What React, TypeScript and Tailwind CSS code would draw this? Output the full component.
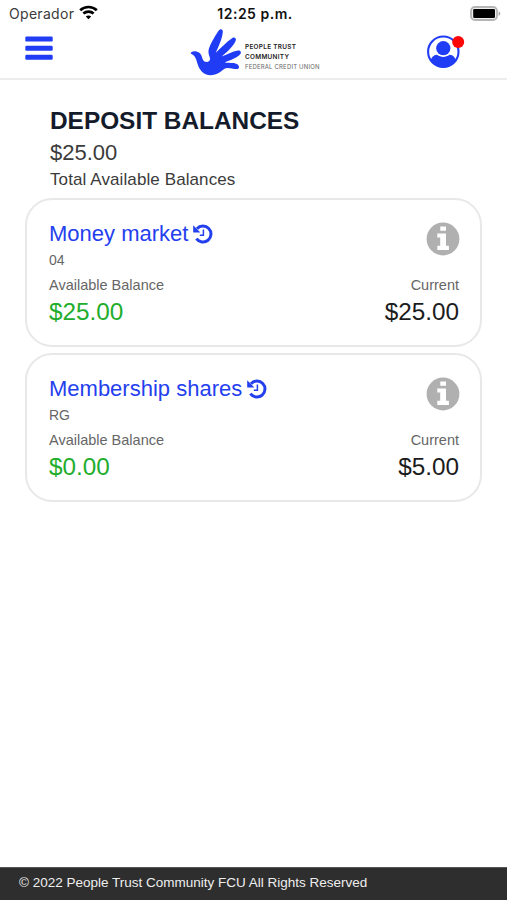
type Account = { name: string; code: string; available: string; current: string };

const accounts: Account[] = [
  { name: "Money market", code: "04", available: "$25.00", current: "$25.00" },
  { name: "Membership shares", code: "RG", available: "$0.00", current: "$5.00" },
];

function StatusBar() {
  return (
    <div className="grid h-7 grid-cols-[1fr_auto_1fr] items-center pr-[6px] pl-[9px] font-['Inter','Liberation_Sans',sans-serif]">
      <div className="flex items-center gap-[5px] text-[14px] leading-7 text-[#3a3a3a]">
        <span className="tracking-[0.3px]">Operador</span>
        <svg width="19" height="15" viewBox="0 0 19 15" className="-mt-[3px]" fill="none" stroke="#000" strokeWidth="2.7">
          <path d="M1.2 5.3C5.8 .9 13.2 .9 17.8 5.3" />
          <path d="M4.4 8.6C7.3 5.9 11.7 5.9 14.6 8.6" />
          <path d="M9.5 14.2 6.8 11.5C8.3 10.1 10.7 10.1 12.2 11.5Z" fill="#000" stroke="none" />
        </svg>
      </div>
      <span className="text-[14px] leading-7 font-semibold tracking-[0.5px] text-[#111]">12:25 p.m.</span>
      <svg width="31" height="15" viewBox="0 0 31 15" className="-mt-[2px] justify-self-end">
        <rect x="1" y="1" width="26" height="13" rx="4" fill="#eee" stroke="#b5b5b5" strokeWidth="1.8" />
        <rect x="3.2" y="3" width="21.8" height="9" rx="1.2" fill="#000" />
        <path d="M28.6 5.2C30.8 6 30.8 9 28.6 9.8Z" fill="#a5a5a5" />
      </svg>
    </div>
  );
}

function MenuIcon() {
  return (
    <svg width="28" height="24" viewBox="0 0 28 24" className="mt-[8px]" fill="#213cf5">
      <rect x=".3" y=".6" width="27.4" height="5" rx="1.2" />
      <rect x=".3" y="9.7" width="27.4" height="5" rx="1.2" />
      <rect x=".3" y="18.8" width="27.4" height="5" rx="1.2" />
    </svg>
  );
}

function Logo() {
  return (
    <div className="flex items-start">
      <svg width="52" height="48" viewBox="190 28 52 48" fill="#213cf5">
        <path d="M190.6 53.4C191.2 50.6 196.5 50.4 199.4 52.8C203 56 201.7 60.8 205.2 61.8C207.8 62.4 210.4 61.2 210 58.5C209.8 56.5 208 53.5 208.5 50.5C209.7 44.5 214.6 37 218.5 30.8C219.9 28.4 222.8 28.7 222.8 31.4C222.6 38.2 218.5 46 215.8 52.8C220.5 48.2 226.5 42 232.4 38C234.8 36.8 236.6 38.6 235.6 41C232.9 47 227 52 221.7 56.4C226.5 54.8 232.3 51.3 238 50.4C240.8 50.2 241.7 52.5 240.2 54.3C236.4 58.6 230 60.2 224.7 62.4C228.5 63.3 233 62 236.9 63.9C239.8 65.6 239.6 68.7 236.9 69.1C233 69.3 229.5 67.4 226 68.3C221.8 69.4 220 74.8 211 75.2C203.5 75.4 199.3 69.7 197.7 64.2C196.3 60 196 55.8 190.6 53.4Z" />
      </svg>
      <div className="mt-[15px] ml-[3px] font-['Inter','Liberation_Sans',sans-serif] text-[6.4px] leading-[9.5px] font-semibold tracking-[0.3px] whitespace-nowrap text-[#222]">
        <div>PEOPLE TRUST</div>
        <div>COMMUNITY</div>
        <div className="text-[6px] font-normal tracking-[0.17px] text-[#666]">FEDERAL CREDIT UNION</div>
      </div>
    </div>
  );
}

function Profile() {
  return (
    <svg width="38" height="33" viewBox="0 0 38 33">
      <clipPath id="avatar">
        <circle cx="16.3" cy="16.7" r="15.5" />
      </clipPath>
      <circle cx="16.3" cy="16.7" r="15.2" fill="#fff" stroke="#213cf5" strokeWidth="2.1" />
      <circle cx="16.3" cy="13.2" r="7.1" fill="#213cf5" />
      <path clipPath="url(#avatar)" d="M3 33V28C4 22.5 6.5 19.8 10 19.8C14 22.6 18.6 22.6 22.6 19.8C26.1 19.8 28.6 22.5 29.6 28V33Z" fill="#213cf5" />
      <circle cx="31.2" cy="7.1" r="6" fill="#ff0505" />
    </svg>
  );
}

function HistoryIcon() {
  return (
    <svg width="20" height="20" viewBox="0 0 20 20" fill="none" stroke="#2440ee">
      <path d="M4 4.7A8 8 0 1 1 3.4 14.6" strokeWidth="3" />
      <path d="M.2 1.2V8.4H7.4Z" fill="#2440ee" stroke="none" />
      <path d="M10.4 5.4V11.2H6.8" strokeWidth="1.5" />
    </svg>
  );
}

function InfoIcon() {
  return (
    <svg width="34" height="34" viewBox="0 0 34 34" className="mt-[2px] -mr-px">
      <circle cx="17" cy="17" r="16.4" fill="#b0b0b0" />
      <path d="M14.3 4.4H20V8.8H14.3ZM11.3 11.4H20V23.8H22.9V28H11.3V23.8H14.2V15.4H11.3Z" fill="#fff" />
    </svg>
  );
}

function AccountCard({ account }: { account: Account }) {
  return (
    <section className="h-[149px] rounded-[27px] border-2 border-[#e8e8e8] pt-[20px] pr-[21px] pl-[22px]">
      <div className="flex h-[52px] justify-between">
        <div>
          <h2 className="flex items-center gap-[5px] text-[22px] leading-[27px] text-[#2440ee]">
            {account.name}
            <HistoryIcon />
          </h2>
          <div className="text-[14px] leading-[26px] text-[#666]">{account.code}</div>
        </div>
        <InfoIcon />
      </div>
      <div className="flex justify-between text-[14.5px] leading-[26px] text-[#666]">
        <span>Available Balance</span>
        <span>Current</span>
      </div>
      <div className="flex justify-between text-[24.3px] leading-[27px]">
        <span className="text-[#22ad2d]">{account.available}</span>
        <span className="text-[#1c1c1c]">{account.current}</span>
      </div>
    </section>
  );
}

export default function App() {
  return (
    <div className="flex h-[900px] w-[507px] flex-col bg-white font-['Liberation_Sans',Arial,sans-serif]">
      <StatusBar />
      <header className="grid h-[52px] grid-cols-[165px_1fr_auto] items-start border-b-2 border-[#ededed] pr-[42px] pl-[25px]">
        <MenuIcon />
        <Logo />
        <div className="mt-[7px]">
          <Profile />
        </div>
      </header>
      <main className="flex-1 px-[25px] pt-[26px]">
        <div className="h-[92px] pl-[25px] text-[#3b3b3b]">
          <h1 className="text-[24.4px] leading-[30px] font-bold text-[#141b2b]">DEPOSIT BALANCES</h1>
          <div className="text-[22px] leading-[33px]">$25.00</div>
          <div className="text-[17px] leading-[22px] tracking-[0.1px]">Total Available Balances</div>
        </div>
        <div className="flex flex-col gap-[6px]">
          {accounts.map((account) => (
            <AccountCard key={account.name} account={account} />
          ))}
        </div>
      </main>
      <footer className="h-[33px] border-t border-[#555] bg-[#2e2e2e] pl-[19px] text-[13.5px] leading-[30px] text-[#eee]">
        © 2022 People Trust Community FCU All Rights Reserved
      </footer>
    </div>
  );
}
